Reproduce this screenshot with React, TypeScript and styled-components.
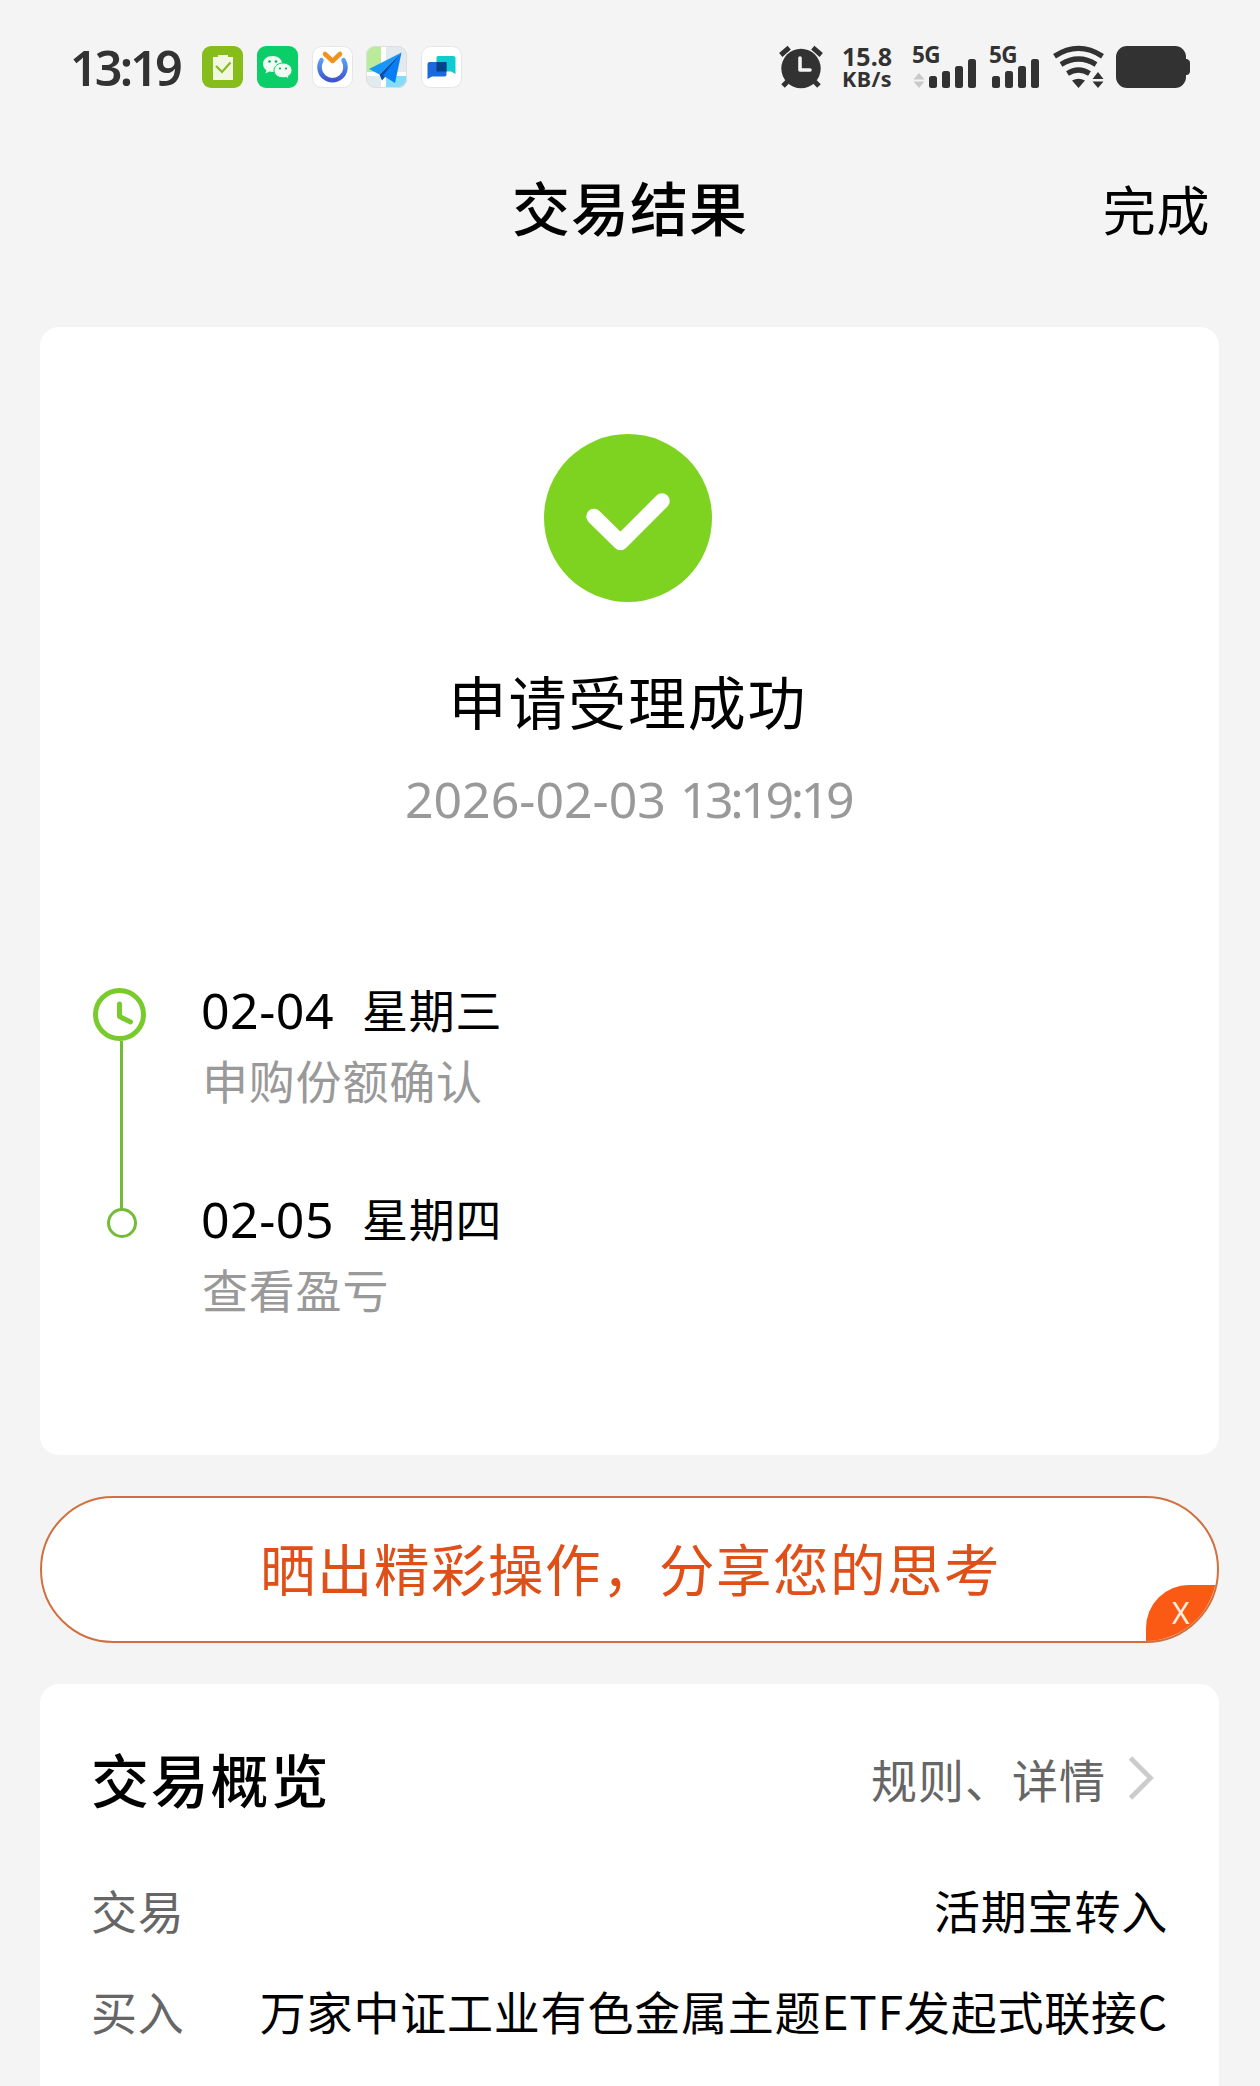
import React from "react";
import styled, { createGlobalStyle } from "styled-components";

const cjk = `"Noto Sans CJK SC", "Noto Sans", sans-serif`;
const latin = `"Noto Sans", "Noto Sans CJK SC", sans-serif`;
const ink = "#323232";

const GlobalStyle = createGlobalStyle`
  * { box-sizing: border-box; }
  body { margin: 0; background: #f4f4f4; font-family: ${cjk}; color: #000; }
  svg { display: block; flex: none; overflow: visible; }
`;

const Screen = styled.div`
  width: 1260px;
  height: 2086px;
  overflow: hidden;
  background: #f4f4f4;
  display: flex;
  flex-direction: column;
`;

const StatusBar = styled.div`
  flex: none;
  height: 134px;
  padding: 0 70px 0 70px;
  display: flex;
  justify-content: space-between;
  align-items: center;
`;

const StatusGroup = styled.div`
  display: flex;
  align-items: center;
`;

const Clock = styled.span`
  font: 600 48.5px/60px ${latin};
  letter-spacing: -2.9px;
  color: ${ink};
  width: 132px;
  white-space: nowrap;
`;

const AppIcons = styled.div`
  display: flex;
  gap: 13.8px;
`;

const NetSpeed = styled.div`
  width: 54px;
  margin-left: 17px;
  margin-right: 1px;
  display: flex;
  flex-direction: column;
  align-items: center;
  font-family: ${latin};
  font-weight: 700;
  color: ${ink};
`;

const SpeedValue = styled.span`
  font-size: 25px;
  line-height: 24px;
`;

const SpeedUnit = styled.span`
  font-size: 21.5px;
  line-height: 22px;
  letter-spacing: 0.4px;
`;

const Header = styled.header`
  flex: none;
  height: 193px;
  padding: 0 50px;
  display: grid;
  grid-template-columns: 1fr auto 1fr;
  align-items: start;
`;

const PageTitle = styled.h1`
  grid-column: 2;
  margin: 36px 0 0;
  font-size: 58px;
  line-height: 72px;
  font-weight: 500;
  letter-spacing: 1px;
`;

const DoneButton = styled.button`
  justify-self: end;
  margin: 38px 0 0;
  padding: 0;
  border: 0;
  background: none;
  color: #000;
  font: 400 53px/72px ${cjk};
  letter-spacing: 0.6px;
`;

const Card = styled.section<{ $height: number }>`
  flex: none;
  height: ${(p) => p.$height}px;
  margin: 0 41px 0 40px;
  border-radius: 19px;
  background: #fff;
`;

const Result = styled.div`
  padding: 107px 3px 0 0;
  display: flex;
  flex-direction: column;
  align-items: center;
`;

const ResultTitle = styled.h2`
  margin: 63px 0 0;
  font-size: 58px;
  line-height: 70px;
  font-weight: 400;
  letter-spacing: 1.8px;
`;

const ResultTime = styled.div`
  margin-top: 34px;
  height: 60px;
  display: flex;
  gap: 14px;
  font: 400 50px/60px ${latin};
  color: #999;
`;

const DatePart = styled.span`
  letter-spacing: 0px;
`;

const TimePart = styled.span`
  letter-spacing: -3.4px;
`;

const Timeline = styled.div`
  margin-top: 151px;
  padding-left: 53px;
  display: flex;
`;

const Rail = styled.div`
  width: 108px;
  padding-top: 8px;
  display: flex;
  flex-direction: column;
`;

const RailLine = styled.div`
  width: 3px;
  height: 168px;
  margin-left: 27px;
  background: #74bc38;
`;

const RailDot = styled.div`
  width: 30px;
  height: 30px;
  margin: -1px 0 0 14px;
  border: 3.5px solid #74bc38;
  border-radius: 50%;
`;

const Step = styled.div`
  height: 209px;
`;

const StepDate = styled.div`
  height: 56px;
  display: flex;
  gap: 28px;
  line-height: 56px;
`;

const StepDay = styled.span`
  padding-top: 2px;
  font-family: ${latin};
  font-size: 50px;
  letter-spacing: 0.5px;
`;

const StepWeekday = styled.span`
  font-size: 46px;
  letter-spacing: 0.8px;
`;

const StepNote = styled.div`
  margin-top: 13px;
  padding-left: 1px;
  font-size: 46px;
  line-height: 60px;
  letter-spacing: 0.8px;
  color: #999;
`;

const Banner = styled.div`
  position: relative;
  flex: none;
  height: 147px;
  margin: 41px 41px 41px 40px;
  border: 2px solid #d0703f;
  border-radius: 74px;
  overflow: hidden;
  background: #fff;
  display: flex;
  justify-content: center;
  align-items: center;
`;

const BannerText = styled.span`
  font-size: 55.5px;
  line-height: 70px;
  letter-spacing: 1.5px;
  color: #df4f17;
  margin: -6px 0 0 2px;
`;

const BannerClose = styled.button`
  position: absolute;
  right: -2px;
  bottom: 0;
  width: 73px;
  height: 56px;
  padding: 0 0 0 26px;
  border: 0;
  border-radius: 43px 0 0 0;
  background: #fb5a14;
  color: #fff0e0;
  text-align: left;
  font: 400 30px/56px ${latin};
`;

const OverviewHead = styled.div`
  padding: 60px 64px 0 51px;
  height: 170px;
  display: flex;
  justify-content: space-between;
`;

const OverviewTitle = styled.h2`
  margin: 0;
  font-size: 58px;
  line-height: 68px;
  font-weight: 500;
  letter-spacing: 1.8px;
`;

const DetailLink = styled.a`
  display: flex;
  height: 68px;
  align-items: center;
  gap: 22px;
  font-size: 46px;
  letter-spacing: 1px;
  color: #666;
`;

const Row = styled.div`
  height: 101px;
  padding: 25px 51px 0 51px;
  display: flex;
  justify-content: space-between;
  font-size: 46px;
  line-height: 60px;
  letter-spacing: 0.8px;
  white-space: nowrap;
`;

const RowLabel = styled.span`
  color: #666;
`;

const steps = [
  { day: "02-04", weekday: "星期三", note: "申购份额确认" },
  { day: "02-05", weekday: "星期四", note: "查看盈亏" },
];

const rows = [
  { label: "交易", value: "活期宝转入" },
  { label: "买入", value: "万家中证工业有色金属主题ETF发起式联接C" },
];

const ClipboardApp = () => (
  <svg width="41" height="42" viewBox="0 0 41 42">
    <rect width="41" height="42" rx="9" fill="#86bd1b" />
    <path d="M11 11h5V9h10v2h5v23H11z" fill="#f1f8df" />
    <path d="M14 20l6 6 8.500-9.500" fill="none" stroke="#86bd1b" strokeWidth="2.200" />
  </svg>
);

const ChatApp = () => (
  <svg width="41" height="42" viewBox="0 0 41 42">
    <rect width="41" height="42" rx="9" fill="#0bce69" />
    <path d="M15.500 10C10 10 6 13.500 6 18c0 2.600 1.300 4.700 3.500 6.200L8.500 27.500l3.800-2c1 .3 2.100.5 3.200.5 5.500 0 9.700-3.500 9.700-8S21 10 15.500 10z" fill="#effbf3" />
    <path d="M26 17c-5 0-9 3.200-9 7.400s4 7.400 9 7.400c1 0 2-.2 2.900-.4l3.200 1.600-.8-2.800c2.300-1.400 3.700-3.500 3.700-5.800 0-4.200-4-7.400-9-7.400z" fill="#effbf3" stroke="#0bce69" strokeWidth="1" />
    <g fill="#0baf59">
      <circle cx="12.500" cy="15.500" r="1.300" />
      <circle cx="19" cy="15.500" r="1.300" />
      <circle cx="23" cy="22.500" r="1.100" />
      <circle cx="29" cy="22.500" r="1.100" />
    </g>
  </svg>
);

const RingApp = () => (
  <svg width="41" height="42" viewBox="0 0 41 42">
    <defs>
      <linearGradient id="ring" x1="0" y1="0" x2="0" y2="1">
        <stop offset="0" stopColor="#5b9ef0" />
        <stop offset="1" stopColor="#3d56cf" />
      </linearGradient>
    </defs>
    <rect x=".5" y=".5" width="40" height="41" rx="9" fill="#fff" stroke="#e6e6e6" />
    <path d="M9.500 14.200a13 13 0 1 0 22 0" fill="none" stroke="url(#ring)" strokeWidth="4.500" strokeLinecap="round" />
    <path d="M13 8l7.500 7L28 8" fill="none" stroke="#f0921e" strokeWidth="4.500" strokeLinecap="round" strokeLinejoin="round" />
  </svg>
);

const MapApp = () => (
  <svg width="41" height="42" viewBox="0 0 41 42">
    <defs>
      <clipPath id="mapClip"><rect width="41" height="42" rx="9" /></clipPath>
    </defs>
    <g clipPath="url(#mapClip)">
      <rect width="41" height="42" fill="#e3eaee" />
      <path d="M0 0h15v26H0z" fill="#baeb9b" />
      <path d="M15 0h5v42h-5zM0 26h41v4H0z" fill="#fff" />
      <path d="M20 30h21v12H20z" fill="#85dcf8" />
    </g>
    <rect x=".5" y=".5" width="40" height="41" rx="9" fill="none" stroke="#dcdfe0" />
    <path d="M35.500 6.500L3 23l10.500 5.500z" fill="#1697fb" />
    <path d="M35.500 6.500L13.500 28.500l2.500 6 3-3.500z" fill="#0a4dab" />
    <path d="M35.500 6.500L17 29.500l12 7.500z" fill="#087df5" />
  </svg>
);

const MessagesApp = () => (
  <svg width="41" height="42" viewBox="0 0 41 42">
    <rect x=".5" y=".5" width="40" height="41" rx="9" fill="#fff" stroke="#e6e6e6" />
    <path d="M17 10h15q2.500 0 2.500 2.500V28L30 25.500H15.500V11.500Q15.500 10 17 10z" fill="#12cbd1" />
    <path d="M8.500 16H25.500v12.500q0 2-2 2H11L6.500 33V18q0-2 2-2z" fill="#1b69dc" />
    <path d="M15.500 16h10v9.500h-10z" fill="#06418a" />
  </svg>
);

const AlarmIcon = () => (
  <svg width="44" height="42" viewBox="0 0 44 42">
    <g stroke={ink} strokeWidth="5" fill="none">
      <path d="M1.800 9L10.200 1.700M42.200 9L33.800 1.700" />
      <path d="M10 34l-6 6M34 34l6 6" />
    </g>
    <circle cx="22" cy="22.500" r="19.700" fill={ink} />
    <path d="M21 12v12h10" fill="none" stroke="#f4f4f4" strokeWidth="3.600" strokeLinecap="round" strokeLinejoin="round" />
  </svg>
);

const SignalIcon = ({ barsFrom, idle }: { barsFrom: number; idle?: boolean }) => (
  <svg width={barsFrom + 48} height="42" viewBox={`0 0 ${barsFrom + 48} 42`}>
    <text x="-1" y="16.500" fontFamily="Noto Sans, sans-serif" fontWeight="700" fontSize="22.500" letterSpacing="-.5" fill={ink}>5G</text>
    {idle && <path d="M.5 33.500L6 27l5.500 6.500zM.5 35.500L6 42l5.500-6.500z" fill="#c9c9c9" />}
    {[12, 17, 22, 29].map((h, i) => (
      <rect key={h} x={barsFrom + i * 13} y={42 - h} width="8" height={h} rx="2.500" fill={ink} />
    ))}
  </svg>
);

const WifiIcon = () => (
  <svg width="52" height="42" viewBox="0 0 52 42">
    <g fill="none" stroke={ink} strokeWidth="5.200">
      <path d="M1.500 10.200Q25.500-5.500 49.500 10.200" />
      <path d="M8 18.500Q25.500 7.500 43 18.500" />
      <path d="M14.500 27.500Q25.500 20.500 36.500 27.500" />
    </g>
    <path d="M19 34.500Q25.500 31 32 34.500L25.500 42zM39.500 33L45 26l5.500 7zM39.500 35.500L45 42l5.500-6.500z" fill={ink} />
  </svg>
);

const BatteryIcon = () => (
  <svg width="74" height="42" viewBox="0 0 74 42">
    <rect width="70" height="42" rx="11" fill={ink} />
    <path d="M69 13h2q3 1 3 4v8q0 3-3 4h-2z" fill={ink} />
  </svg>
);

const Gap = styled.div<{ $w: number }>`
  width: ${(p) => p.$w}px;
`;

const SuccessIcon = () => (
  <svg width="168" height="168" viewBox="0 0 168 168">
    <circle cx="84" cy="84" r="84" fill="#7ed321" />
    <path d="M50 82.500L76.500 108.500 118 67" fill="none" stroke="#fff" strokeWidth="15.500" strokeLinecap="round" strokeLinejoin="round" />
  </svg>
);

const ClockIcon = () => (
  <svg width="53" height="53" viewBox="0 0 53 53">
    <circle cx="26.500" cy="26.500" r="24" fill="none" stroke="#78cb2a" strokeWidth="5" />
    <path d="M26.500 16v12.500l11 5.500" fill="none" stroke="#78cb2a" strokeWidth="5" strokeLinecap="round" strokeLinejoin="round" />
  </svg>
);

const Chevron = () => (
  <svg width="27" height="44" viewBox="0 0 27 44">
    <path d="M2.500 2L22.500 22 2.500 42" fill="none" stroke="#ccc" strokeWidth="4.800" />
  </svg>
);

export default function App() {
  return (
    <Screen>
      <GlobalStyle />
      <StatusBar>
        <StatusGroup>
          <Clock>13:19</Clock>
          <AppIcons>
            <ClipboardApp />
            <ChatApp />
            <RingApp />
            <MapApp />
            <MessagesApp />
          </AppIcons>
        </StatusGroup>
        <StatusGroup>
          <AlarmIcon />
          <NetSpeed>
            <SpeedValue>15.8</SpeedValue>
            <SpeedUnit>KB/s</SpeedUnit>
          </NetSpeed>
          <Gap $w={18} />
          <SignalIcon barsFrom={16} idle />
          <Gap $w={13} />
          <SignalIcon barsFrom={2} />
          <Gap $w={13} />
          <WifiIcon />
          <Gap $w={11} />
          <BatteryIcon />
        </StatusGroup>
      </StatusBar>

      <Header>
        <PageTitle>交易结果</PageTitle>
        <DoneButton>完成</DoneButton>
      </Header>

      <Card $height={1128}>
        <Result>
          <SuccessIcon />
          <ResultTitle>申请受理成功</ResultTitle>
          <ResultTime>
            <DatePart>2026-02-03</DatePart>
            <TimePart>13:19:19</TimePart>
          </ResultTime>
        </Result>
        <Timeline>
          <Rail>
            <ClockIcon />
            <RailLine />
            <RailDot />
          </Rail>
          <div>
            {steps.map((s) => (
              <Step key={s.day}>
                <StepDate>
                  <StepDay>{s.day}</StepDay>
                  <StepWeekday>{s.weekday}</StepWeekday>
                </StepDate>
                <StepNote>{s.note}</StepNote>
              </Step>
            ))}
          </div>
        </Timeline>
      </Card>

      <Banner>
        <BannerText>晒出精彩操作，分享您的思考</BannerText>
        <BannerClose>X</BannerClose>
      </Banner>

      <Card $height={440}>
        <OverviewHead>
          <OverviewTitle>交易概览</OverviewTitle>
          <DetailLink>
            规则、详情
            <Chevron />
          </DetailLink>
        </OverviewHead>
        {rows.map((r) => (
          <Row key={r.label}>
            <RowLabel>{r.label}</RowLabel>
            <span>{r.value}</span>
          </Row>
        ))}
      </Card>
    </Screen>
  );
}
